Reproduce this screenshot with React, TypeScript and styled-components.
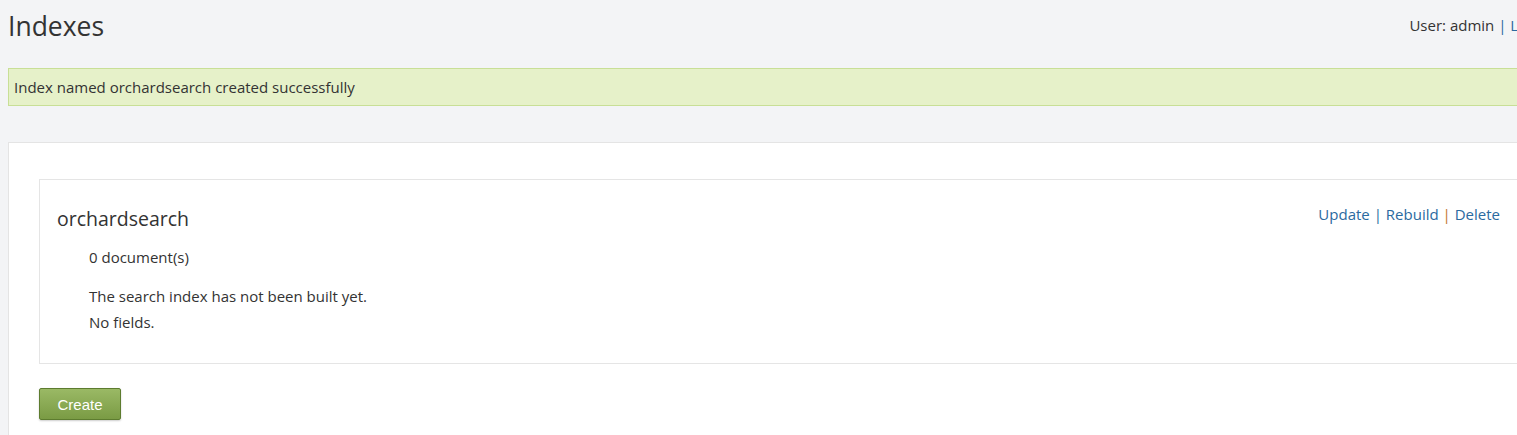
import React from "react";
import styled, { createGlobalStyle } from "styled-components";

const Global = createGlobalStyle`
  html, body { margin: 0; padding: 0; overflow: hidden; background: #f3f4f6; }
  body { font-family: "Open Sans", "Noto Sans", sans-serif; color: #333; font-size: 15px; }
`;

const Page = styled.div`
  width: 1557px;
  padding: 0 8px;
  box-sizing: border-box;
`;

const Header = styled.header`
  display: flex;
  justify-content: space-between;
  align-items: flex-start;
  height: 68px;
`;

const Title = styled.h1`
  margin: 8px 0 0;
  font-size: 26.5px;
  font-weight: 400;
  line-height: 36px;
  color: #333;
`;

const UserBar = styled.div`
  margin: 15px -12px 0 0;
  font-size: 15px;
  line-height: 20px;
  color: #333;
`;

const Link = styled.a`
  color: #2b6aa0;
  text-decoration: none;
`;

const Sep = styled.span<{ $color?: string }>`
  color: ${(p) => p.$color || "#2b6aa0"};
`;

const Message = styled.div`
  background: #e6f1c9;
  border: 1px solid #c8df96;
  padding: 8px 5px;
  line-height: 20px;
  font-size: 15px;
  color: #333;
`;

const Panel = styled.section`
  margin-top: 36px;
  background: #fff;
  border: 1px solid #e4e4e4;
  padding: 36px 30px 40px;
  min-height: 400px;
`;

const IndexBox = styled.div`
  border: 1px solid #e5e5e5;
  padding: 24px 17px 28px;
`;

const IndexHead = styled.div`
  display: flex;
  justify-content: space-between;
  align-items: flex-start;
`;

const IndexName = styled.h2`
  margin: 0;
  font-size: 19.5px;
  font-weight: 400;
  line-height: 30px;
  color: #333;
`;

const Actions = styled.div`
  font-size: 15px;
  line-height: 20px;
`;

const Details = styled.div`
  padding-left: 32px;
  margin-top: 10px;
`;

const Line = styled.p<{ $gap?: number }>`
  margin: ${(p) => p.$gap || 0}px 0 0;
  line-height: 26px;
  font-size: 15px;
`;

const CreateButton = styled.button`
  display: block;
  margin-top: 24px;
  width: 82px;
  height: 32px;
  border: 1px solid #5d7c2f;
  border-radius: 2px;
  background: linear-gradient(#9ab965, #7a9b44);
  color: #fff;
  font-family: "Liberation Sans", Arial, sans-serif;
  font-size: 15px;
  box-shadow: 0 1px 2px rgba(0,0,0,0.2);
  cursor: pointer;
`;

export default function App() {
  return (
    <>
      <Global />
      <Page>
        <Header>
          <Title>Indexes</Title>
          <UserBar>
            User: admin <Sep>|</Sep> <Link href="#">Log Off</Link>
          </UserBar>
        </Header>
        <Message>Index named orchardsearch created successfully</Message>
        <Panel>
          <IndexBox>
            <IndexHead>
              <IndexName>orchardsearch</IndexName>
              <Actions>
                <Link href="#">Update</Link> <Sep>|</Sep> <Link href="#">Rebuild</Link>{" "}
                <Sep $color="#c2762a">|</Sep> <Link href="#">Delete</Link>
              </Actions>
            </IndexHead>
            <Details>
              <Line>0 document(s)</Line>
              <Line $gap={13}>The search index has not been built yet.</Line>
              <Line>No fields.</Line>
            </Details>
          </IndexBox>
          <CreateButton>Create</CreateButton>
        </Panel>
      </Page>
    </>
  );
}
